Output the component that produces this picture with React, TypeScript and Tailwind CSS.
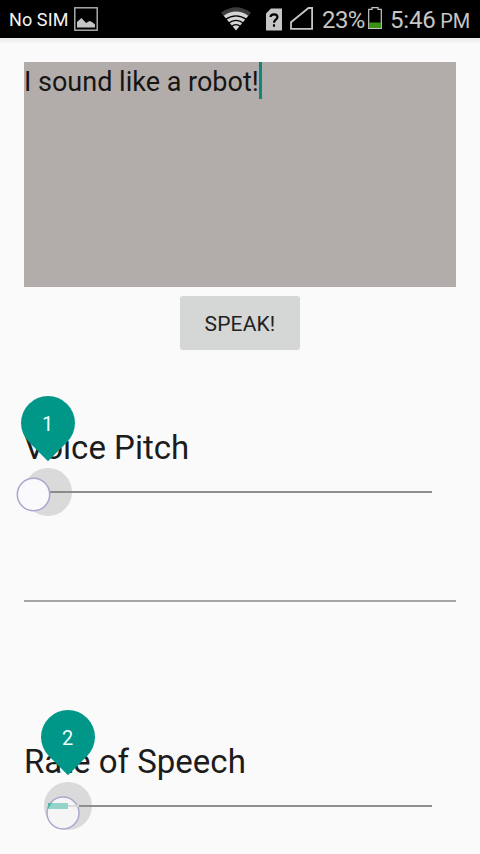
import React from "react";

type MarkerProps = {
  label: string;
};

type SliderProps = {
  title: string;
  children: React.ReactNode;
};

const StatusBar = () => {
  return (
    <header className="flex h-[38px] w-full items-center bg-black text-[#c6c6c6]">
      <span className="ml-[9px] w-[65px] whitespace-nowrap pt-[2px] text-[18px] leading-[38px] tracking-[0.1px] text-[#f4f4f4]">
        No SIM
      </span>
      <svg width="24" height="24" viewBox="0 0 24 24" fill="none">
        <rect x="0.8" y="0.8" width="22.4" height="22.4" stroke="#b4b4b4" strokeWidth="1.4" />
        <path d="M3 20.5V15L7.5 11L12 16L15.5 14L18 15L21 17.5V20.5Z" fill="#c6c6c6" />
      </svg>
      <svg className="ml-[122px]" width="32" height="26" viewBox="0 0 32 26">
        <path d="M1 6.8Q16 -4.3 31 6.8L28 10.4Q16 2.4 4 10.4Z" fill="#3c3c3c" />
        <path d="M3.7 9.7Q16 1.3 28.3 9.7L16 24.5Z" fill="#d4d4d4" />
        <path
          d="M5 13.6Q16 6 27 13.6M8.4 17.2Q16 11.7 23.6 17.2M11.4 20.4Q16 16.8 20.6 20.4"
          fill="none"
          stroke="#000000"
          strokeWidth="1.3"
        />
      </svg>
      <svg className="ml-[14px]" width="16" height="24" viewBox="0 0 16 24">
        <path d="M5 1.5H16V23.5H0V6.5Z" fill="#c6c6c6" />
        <path
          d="M4.5 10C4.8 6.5 11.5 6.5 11.5 10.1C11.5 12.7 8 12.7 8 15.7M8 17.3V19.7"
          fill="none"
          stroke="#000000"
          strokeWidth="2.1"
        />
      </svg>
      <svg className="ml-[8px]" width="24" height="24" viewBox="0 0 24 24" fill="none">
        <path d="M1 21.9V15.3L18.5 1H22.1V21.9Z" stroke="#c6c6c6" strokeWidth="1.8" />
      </svg>
      <span className="ml-[8px] w-[46px] whitespace-nowrap pt-[2px] text-[24px] leading-[38px] tracking-[-0.6px]">
        23%
      </span>
      <svg width="14" height="24" viewBox="0 0 14 24">
        <path d="M0.7 2.3H4V0.6H10V2.3H13.3V21.3H0.7Z" fill="none" stroke="#c6c6c6" strokeWidth="1.2" />
        <rect x="1" y="15.5" width="12" height="5.5" fill="#3b9212" />
      </svg>
      <span className="ml-[8px] whitespace-nowrap pt-[2px] text-[24px] leading-[38px] tracking-[-0.2px]">
        5:46 <span className="-ml-[1px] text-[20px] tracking-[-0.1px]">PM</span>
      </span>
    </header>
  );
};

const Marker = ({ label }: MarkerProps) => {
  return (
    <svg width="54" height="66" viewBox="0 0 54 66">
      <path d="M27 65.2L7.9 46.1A27 27 0 1 1 46.1 46.1Z" fill="#009688" />
      <text x="26.5" y="34.5" textAnchor="middle" fontSize="20" fill="#e9fffb">
        {label}
      </text>
    </svg>
  );
};

const Slider = ({ title, children }: SliderProps) => {
  return (
    <section className="relative mx-6 h-[98px]">
      <h2 className="h-[44px] whitespace-nowrap pt-px text-[33px] leading-[44px] text-[#1c1c1c]">
        {title}
      </h2>
      <div className="mx-6 mt-[22px] h-[2px] bg-[#8e8e8e]"></div>
      {children}
    </section>
  );
};

const App = () => {
  return (
    <div className="h-[854px] w-[480px] overflow-hidden bg-[#fafafa] font-[Roboto,sans-serif]">
      <StatusBar />
      <div className="h-[6px] bg-linear-to-b from-[#e9e9e9] to-[#fafafa]"></div>
      <main className="flex flex-col">
        <div className="mx-6 mt-[18px] flex h-[225px] items-start bg-[#b2adaa]">
          <span className="w-[235px] whitespace-nowrap pt-px text-[27px] leading-[38px] text-[#171514]">
            I sound like a robot!
          </span>
          <span className="h-[37px] w-[3px] bg-[#118778]"></span>
        </div>
        <button className="mt-[9px] h-[54px] w-[120px] self-center rounded-[3px] bg-[#d5d7d6] pt-[3px] text-[21px] tracking-[0.15px] text-[#222222]">
          SPEAK!
        </button>

        <div className="mt-[75px]">
          <Slider title="Voice Pitch">
            <svg className="absolute -left-[10px] top-[40px]" width="64" height="54" viewBox="0 0 64 54">
              <circle cx="34" cy="27" r="24" fill="#dadada" />
              <path d="M34 27H64" stroke="#8e8a8c" strokeWidth="2" />
              <circle cx="19.5" cy="29.5" r="16.2" fill="#fafafc" stroke="#a9a6d0" strokeWidth="1.5" />
            </svg>
            <div className="absolute -left-[3px] -top-[29px]">
              <Marker label="1" />
            </div>
          </Slider>
        </div>

        <div className="mx-6 mt-[77px] h-[2px] bg-[#a5a5a5]"></div>

        <div className="mt-[137px]">
          <Slider title="Rate of Speech">
            <svg className="absolute left-[16px] top-[40px]" width="64" height="54" viewBox="0 0 64 54">
              <circle cx="28" cy="27" r="24" fill="#dadada" />
              <path d="M38 27H64" stroke="#8e8e8e" strokeWidth="2" />
              <circle cx="23" cy="34" r="16" fill="#f5f5f6" stroke="#a9aace" strokeWidth="1.5" />
              <path d="M28 27H39" stroke="#dadada" strokeWidth="2" />
              <path d="M8 24H28V30H8Z" fill="#93d4ca" />
              <path d="M8 24H12L8 30Z" fill="#55b5aa" />
            </svg>
            <div className="absolute left-[17px] -top-[29px]">
              <Marker label="2" />
            </div>
          </Slider>
        </div>
      </main>
    </div>
  );
};

export default App;
